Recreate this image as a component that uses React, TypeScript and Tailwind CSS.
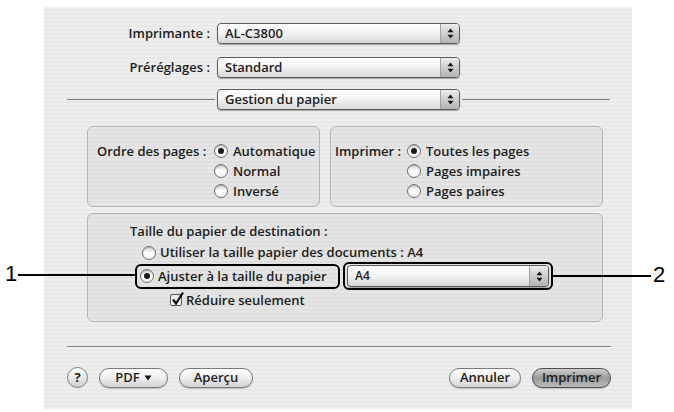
import React from "react";

const UpDown = () => (
  <svg width="7" height="11" viewBox="0 0 7 11">
    <path d="M3.5 0.5 L6.5 4.2 L0.5 4.2 Z" fill="#161616" />
    <path d="M0.5 6.8 L6.5 6.8 L3.5 10.5 Z" fill="#161616" />
  </svg>
);

function Popup({ label, className }: { label: string; className: string }) {
  return (
    <div
      className={`flex items-stretch rounded-[4px] border border-[#5c5c5c] bg-linear-to-b from-white via-[#f2f2f2] to-[#d8d8d8] shadow-[0_1px_1px_rgba(0,0,0,0.3)] ${className}`}
    >
      <span className="flex-1 flex items-center pl-[7px] leading-none">{label}</span>
      <span className="w-[19px] flex items-center justify-center rounded-r-[3px] border-l border-[#a3a3a3] bg-linear-to-b from-[#eeeeee] via-[#cdcdcd] to-[#b4b4b4]">
        <UpDown />
      </span>
    </div>
  );
}

function Radio({ on }: { on?: boolean }) {
  return (
    <span className="w-[14px] h-[14px] shrink-0 rounded-full border border-[#707070] bg-linear-to-b from-[#d4d4d4] via-white to-[#f2f2f2] shadow-[inset_0_1px_1px_rgba(0,0,0,0.2)] flex items-center justify-center">
      {on && <span className="w-[6px] h-[6px] rounded-full bg-[#1a1a1a]" />}
    </span>
  );
}

function RadioRow({ on, label }: { on?: boolean; label: string }) {
  return (
    <div className="flex items-center gap-[5px] h-[20px]">
      <Radio on={on} />
      <span className="leading-none">{label}</span>
    </div>
  );
}

function Btn({
  children,
  className,
  primary,
}: {
  children: React.ReactNode;
  className: string;
  primary?: boolean;
}) {
  const look = primary
    ? "border-[#4f4f4f] from-[#cfcfcf] via-[#9a9a9a] to-[#bbbbbb]"
    : "border-[#7a7a7a] from-white via-[#ededed] to-[#d3d3d3]";
  return (
    <div
      className={`h-[20px] flex items-center justify-center rounded-full border bg-linear-to-b shadow-[0_1px_1px_rgba(0,0,0,0.2)] leading-none ${look} ${className}`}
    >
      {children}
    </div>
  );
}

export default function App() {
  return (
    <div className="relative w-[674px] h-[412px] overflow-hidden bg-white pt-[7px] pl-[44px] font-['Open_Sans',sans-serif] font-semibold text-[13px] text-[#1c1c1c]">
      {/* Dialog sheet */}
      <div className="w-[588px] h-[402px] flex flex-col pt-[16px] bg-[#ececec] bg-[image:repeating-linear-gradient(180deg,#eeeeee_0px,#eeeeee_2px,#e8e8e8_2px,#e8e8e8_4px)]">
        {/* Printer / presets */}
        <div className="flex items-center h-[21px]">
          <span className="w-[166px] text-right leading-none">Imprimante :</span>
          <Popup label="AL-C3800" className="ml-[7px] w-[243px] h-[21px]" />
        </div>
        <div className="flex items-center h-[21px] mt-[13px]">
          <span className="w-[166px] text-right leading-none">Préréglages :</span>
          <Popup label="Standard" className="ml-[7px] w-[243px] h-[21px]" />
        </div>
        <div className="flex items-center h-[21px] mt-[11px] pl-[23px]">
          <div className="w-[148px] h-px bg-[#7d7d7d]" />
          <Popup label="Gestion du papier" className="ml-[2px] w-[243px] h-[21px]" />
          <div className="ml-[2px] w-[148px] h-px bg-[#7d7d7d]" />
        </div>

        {/* Page order / print */}
        <div className="flex mt-[16px] pl-[43px] gap-[10px]">
          <div className="w-[233px] h-[81px] flex rounded-[6px] border border-[#b5b5b5] bg-black/[0.035] pt-[14px] pl-[9px]">
            <span className="w-[117px] h-[20px] flex items-center leading-none">Ordre des pages :</span>
            <div className="flex flex-col">
              <RadioRow on label="Automatique" />
              <RadioRow label="Normal" />
              <RadioRow label="Inversé" />
            </div>
          </div>
          <div className="w-[273px] h-[81px] flex rounded-[6px] border border-[#b5b5b5] bg-black/[0.035] pt-[14px] pl-[4px]">
            <span className="w-[72px] h-[20px] flex items-center leading-none">Imprimer :</span>
            <div className="flex flex-col">
              <RadioRow on label="Toutes les pages" />
              <RadioRow label="Pages impaires" />
              <RadioRow label="Pages paires" />
            </div>
          </div>
        </div>

        {/* Destination paper size */}
        <div className="ml-[43px] mt-[6px] w-[516px] h-[109px] flex flex-col rounded-[6px] border border-[#b5b5b5] bg-black/[0.035] pt-[8px] pl-[42px]">
          <div className="h-[18px] flex items-center leading-none">Taille du papier de destination :</div>
          <div className="mt-[3px] h-[19px] pl-[12px] flex items-center gap-[4px]">
            <Radio />
            <span className="leading-none">Utiliser la taille papier des documents : A4</span>
          </div>
          <div className="h-[28px] pl-[5px] flex items-center">
            <div className="w-[205px] h-[25px] flex items-center gap-[4px] pl-[3px] rounded-[6px] border-2 border-black">
              <Radio on />
              <span className="leading-none">Ajuster à la taille du papier</span>
            </div>
            <div className="ml-[3px] w-[210px] h-[28px] flex items-center justify-center rounded-[6px] border-2 border-black">
              <Popup label="A4" className="w-[202px] h-[22px] text-[12px]" />
            </div>
          </div>
          <div className="mt-[1px] h-[18px] pl-[40px] flex items-center gap-[4px]">
            <span className="relative w-[12px] h-[12px] shrink-0 rounded-[2px] border border-[#555555] bg-linear-to-b from-[#e6e6e6] to-white">
              <svg className="absolute -top-[4px] left-[0px]" width="14" height="15" viewBox="0 0 14 15">
                <path d="M2 8.5 L5 12.5 L12 1.5" stroke="#111" strokeWidth="2.2" fill="none" />
              </svg>
            </span>
            <span className="leading-none">Réduire seulement</span>
          </div>
        </div>

        {/* Separator */}
        <div className="mt-[24px] ml-[23px] w-[544px] h-px bg-[#858585]" />

        {/* Buttons */}
        <div className="mt-[20px] pl-[23px] pr-[21px] flex items-center">
          <div className="w-[21px] h-[21px] rounded-full border border-[#7a7a7a] bg-linear-to-b from-white to-[#d0d0d0] flex items-center justify-center font-bold text-[13px] leading-none">
            ?
          </div>
          <Btn className="ml-[11px] w-[69px] gap-[4px]">
            <span>PDF</span>
            <svg width="8" height="6" viewBox="0 0 8 6">
              <path d="M0.5 0.5 L7.5 0.5 L4 5.5 Z" fill="#161616" />
            </svg>
          </Btn>
          <Btn className="ml-[11px] w-[74px]">Aperçu</Btn>
          <Btn className="ml-auto w-[72px]">Annuler</Btn>
          <Btn primary className="ml-[11px] w-[79px]">
            Imprimer
          </Btn>
        </div>
      </div>

      {/* Callouts */}
      <span className="absolute left-[5px] top-[263px] font-['Liberation_Sans',sans-serif] font-normal text-[22px] leading-[22px] text-black">1</span>
      <div className="absolute left-[18px] top-[274px] w-[117px] h-[2px] bg-black" />
      <div className="absolute left-[553px] top-[275px] w-[98px] h-[2px] bg-black" />
      <span className="absolute left-[653px] top-[264px] font-['Liberation_Sans',sans-serif] font-normal text-[22px] leading-[22px] text-black">2</span>
    </div>
  );
}
